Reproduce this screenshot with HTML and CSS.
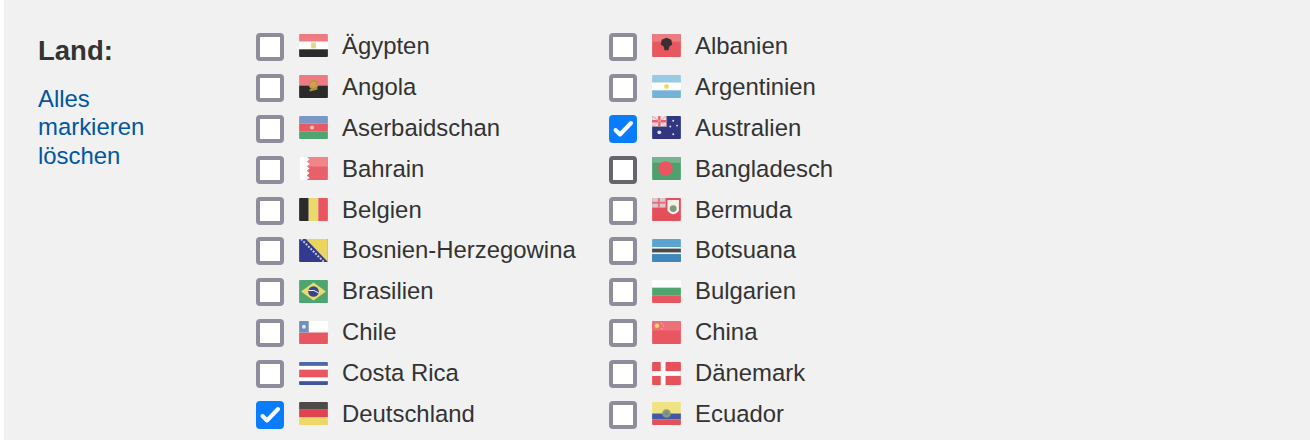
FILE: index.html
```html
<!DOCTYPE html>
<html lang="de">
  <head>
    <meta charset="UTF-8" />
    <title>Land</title>
    <link rel="stylesheet" href="styles.css">
  </head>
  <body>
    <svg class="sprites" aria-hidden="true">
      <symbol id="check" viewBox="0 0 28 28"><path d="M6.500 15l4.500 4.500L22 8" fill="none" stroke="#fff" stroke-width="4" stroke-linecap="round" stroke-linejoin="round"/></symbol>
    </svg>
    <div class="panel">
      <div class="side">
        <div class="heading">Land:</div>
        <a class="clear" href="#">Alles markieren löschen</a>
      </div>
      <ul class="countries">
        <li class="country"><span class="box"></span>
          <svg class="flag" viewBox="0 0 30 24"><rect width="30" height="8" fill="#ee7b82"/><rect y="8" width="30" height="8" fill="#fff"/><rect y="16" width="30" height="8" fill="#2b2b2b"/><rect x="12.500" y="9" width="5" height="6" fill="#e8d77e"/></svg>
          Ägypten</li>
        <li class="country"><span class="box"></span>
          <svg class="flag" viewBox="0 0 30 24"><rect width="30" height="11" fill="#ee7b82"/><rect y="11" width="30" height="13" fill="#2b2b2b"/><circle cx="15" cy="10" r="4" fill="#d99a5c" stroke="#b89a3e" stroke-width="2"/><path d="M11 16l8-2" stroke="#a8923e" stroke-width="2.500"/></svg>
          Angola</li>
        <li class="country"><span class="box"></span>
          <svg class="flag" viewBox="0 0 30 24"><rect width="30" height="8" fill="#7a97c6"/><rect y="8" width="30" height="8" fill="#e75a63"/><rect y="16" width="30" height="8" fill="#4ea56f"/><circle cx="13.500" cy="12" r="2.200" fill="#f2c4c6"/></svg>
          Aserbaidschan</li>
        <li class="country"><span class="box"></span>
          <svg class="flag" viewBox="0 0 30 24"><rect width="30" height="24" fill="#e8616a"/><rect x="8" width="22" height="10" fill="#f0858c"/><path d="M0 0h8l3 2.400-3 2.400 3 2.400-3 2.400 3 2.400-3 2.400 3 2.400-3 2.400 3 2.400-3 2.400H0z" fill="#fff"/></svg>
          Bahrain</li>
        <li class="country"><span class="box"></span>
          <svg class="flag" viewBox="0 0 30 24"><rect width="10" height="24" fill="#2b2b2b"/><rect x="10" width="10" height="24" fill="#ecd96d"/><rect x="20" width="10" height="24" fill="#e8565f"/></svg>
          Belgien</li>
        <li class="country"><span class="box"></span>
          <svg class="flag" viewBox="0 0 30 24"><rect width="30" height="24" fill="#313a8c"/><path d="M7 0h23v24z" fill="#ecd55f"/><path d="M2 0l24 24" stroke="#c9cde4" stroke-width="2" stroke-dasharray="2 1.500"/></svg>
          Bosnien-Herzegowina</li>
        <li class="country"><span class="box"></span>
          <svg class="flag" viewBox="0 0 30 24"><rect width="30" height="24" fill="#4ea56f"/><path d="M15 2.500L28 12 15 21.500 2 12z" fill="#ecd96d"/><circle cx="15" cy="12" r="5.500" fill="#33458e"/><path d="M9.800 11q6-1.500 10.500 2.500" stroke="#fff" stroke-width="1" fill="none"/></svg>
          Brasilien</li>
        <li class="country"><span class="box"></span>
          <svg class="flag" viewBox="0 0 30 24"><rect width="30" height="12" fill="#fff"/><rect y="12" width="30" height="12" fill="#e8565f"/><rect width="10" height="12" fill="#6f8fc4"/><circle cx="5" cy="6" r="2" fill="#e4e9f4"/></svg>
          Chile</li>
        <li class="country"><span class="box"></span>
          <svg class="flag" viewBox="0 0 30 24"><rect width="30" height="24" fill="#fff"/><rect y="0" width="30" height="4" fill="#4a68ab"/><rect y="8" width="30" height="8" fill="#e8565f"/><rect y="20" width="30" height="4" fill="#3f54a0"/></svg>
          Costa Rica</li>
        <li class="country"><span class="box is-checked"><svg class="tick"><use href="#check"/></svg></span>
          <svg class="flag" viewBox="0 0 30 24"><rect width="30" height="8" fill="#4d4a4a"/><rect y="8" width="30" height="8" fill="#e0434f"/><rect y="16" width="30" height="8" fill="#eed766"/></svg>
          Deutschland</li>

        <li class="country"><span class="box"></span>
          <svg class="flag" viewBox="0 0 30 24"><rect width="30" height="24" fill="#e8565f"/><rect width="30" height="8" fill="#ee7b82"/><path d="M15 4l5 2 1 5-3 2-1 4h-4l-1-4-3-2 1-5z" fill="#3a3033"/></svg>
          Albanien</li>
        <li class="country"><span class="box"></span>
          <svg class="flag" viewBox="0 0 30 24"><rect width="30" height="8" fill="#96cbe6"/><rect y="8" width="30" height="8" fill="#fff"/><rect y="16" width="30" height="8" fill="#73b3d6"/><circle cx="15" cy="12" r="2.500" fill="#ecd96d"/></svg>
          Argentinien</li>
        <li class="country"><span class="box is-checked"><svg class="tick"><use href="#check"/></svg></span>
          <svg class="flag" viewBox="0 0 30 24"><rect width="30" height="24" fill="#30367f"/><rect width="15" height="11" fill="#eadfe6"/><path d="M7.500 0v11M0 5.500h15" stroke="#e8616a" stroke-width="2.500"/><path d="M0 0l15 11M15 0L0 11" stroke="#e8a0a8" stroke-width="1"/><circle cx="7.500" cy="17" r="2" fill="#dfe1f0"/><g fill="#dfe1f0"><circle cx="22" cy="5" r="1"/><circle cx="26" cy="10" r="1"/><circle cx="19" cy="11" r="1"/><circle cx="22" cy="19" r="1"/></g></svg>
          Australien</li>
        <li class="country"><span class="box is-hover"></span>
          <svg class="flag" viewBox="0 0 30 24"><rect width="30" height="24" fill="#4fa06f"/><rect width="30" height="6" fill="#74b48f"/><circle cx="14" cy="12" r="7.500" fill="#e8565f"/></svg>
          Bangladesch</li>
        <li class="country"><span class="box"></span>
          <svg class="flag" viewBox="0 0 30 24"><rect width="30" height="24" fill="#e4505a"/><rect width="14" height="10" fill="#dcc9cf"/><path d="M7 0v10M0 5h14" stroke="#e8707a" stroke-width="2"/><path d="M16 2h12v11q-6 8-12 0z" fill="#f4f0ea"/><circle cx="22" cy="11" r="3.500" fill="#7f9a78"/></svg>
          Bermuda</li>
        <li class="country"><span class="box"></span>
          <svg class="flag" viewBox="0 0 30 24"><rect width="30" height="24" fill="#5ba4d0"/><rect y="16" width="30" height="8" fill="#3f86bb"/><rect y="8.500" width="30" height="7" fill="#fff"/><rect y="10" width="30" height="4" fill="#4a4a4d"/></svg>
          Botsuana</li>
        <li class="country"><span class="box"></span>
          <svg class="flag" viewBox="0 0 30 24"><rect width="30" height="8" fill="#fff"/><rect y="8" width="30" height="8" fill="#4ea56f"/><rect y="16" width="30" height="8" fill="#e8565f"/></svg>
          Bulgarien</li>
        <li class="country"><span class="box"></span>
          <svg class="flag" viewBox="0 0 30 24"><rect width="30" height="24" fill="#e8565f"/><rect width="30" height="10" fill="#ee7078"/><circle cx="5" cy="5" r="2.400" fill="#ecd96d"/><g fill="#eeb27c"><circle cx="10" cy="2.500" r=".8"/><circle cx="12" cy="5" r=".8"/><circle cx="10" cy="8" r=".8"/></g></svg>
          China</li>
        <li class="country"><span class="box"></span>
          <svg class="flag" viewBox="0 0 30 24"><rect width="30" height="24" fill="#e8505a"/><rect x="9" width="5" height="24" fill="#fff"/><rect y="9.500" width="30" height="5" fill="#fff"/></svg>
          Dänemark</li>
        <li class="country"><span class="box"></span>
          <svg class="flag" viewBox="0 0 30 24"><rect width="30" height="12" fill="#f0e384"/><rect y="12" width="30" height="6" fill="#3f58a8"/><rect y="18" width="30" height="6" fill="#e4505a"/><circle cx="15" cy="12" r="4.500" fill="#8a9a78"/><circle cx="15" cy="12" r="2" fill="#6f86a6"/></svg>
          Ecuador</li>
      </ul>
    </div>
  </body>
</html>
```

FILE: styles.css
```css
* {
  box-sizing: border-box;
}

body {
  margin: 0;
  height: 440px;
  overflow: hidden;
  background: #fff;
  font-family: "Liberation Sans", Arial, sans-serif;
  color: #333;
}

.sprites {
  display: none;
}

.panel {
  display: flex;
  height: 440px;
  margin-left: 4px;
  padding: 26.500px 0 0 34px;
  background: #f1f1f1;
}

.side {
  width: 218px;
  flex-shrink: 0;
}

.heading {
  margin-top: 9.500px;
  font-size: 27.500px;
  font-weight: bold;
  line-height: 30px;
}

.clear {
  display: block;
  width: 130px;
  margin-top: 18.500px;
  font-size: 23.900px;
  line-height: 28.500px;
  color: #0056a3;
  text-decoration: none;
}

.countries {
  display: grid;
  grid-template-rows: repeat(10, 40.900px);
  grid-template-columns: repeat(2, 353px);
  grid-auto-flow: column;
  margin: -1px 0 0;
  padding: 0;
  list-style: none;
}

.country {
  display: flex;
  align-items: center;
  font-size: 23.900px;
  white-space: nowrap;
}

.box {
  display: block;
  width: 28px;
  height: 28px;
  flex-shrink: 0;
  margin: 2px 15px 0 0;
  background: #fff;
  border: 4px solid #8e8d9b;
  border-radius: 4px;
}

.box.is-hover {
  border-color: #66656b;
}

.box.is-checked {
  position: relative;
  background: #0a7cff;
  border-color: #0a7cff;
}

.tick {
  position: absolute;
  top: -4px;
  left: -4px;
  width: 28px;
  height: 28px;
}

.flag {
  display: block;
  width: 29px;
  height: 23px;
  flex-shrink: 0;
  margin-right: 14px;
  border-radius: 1px;
  filter: blur(0.5px);
}
```
